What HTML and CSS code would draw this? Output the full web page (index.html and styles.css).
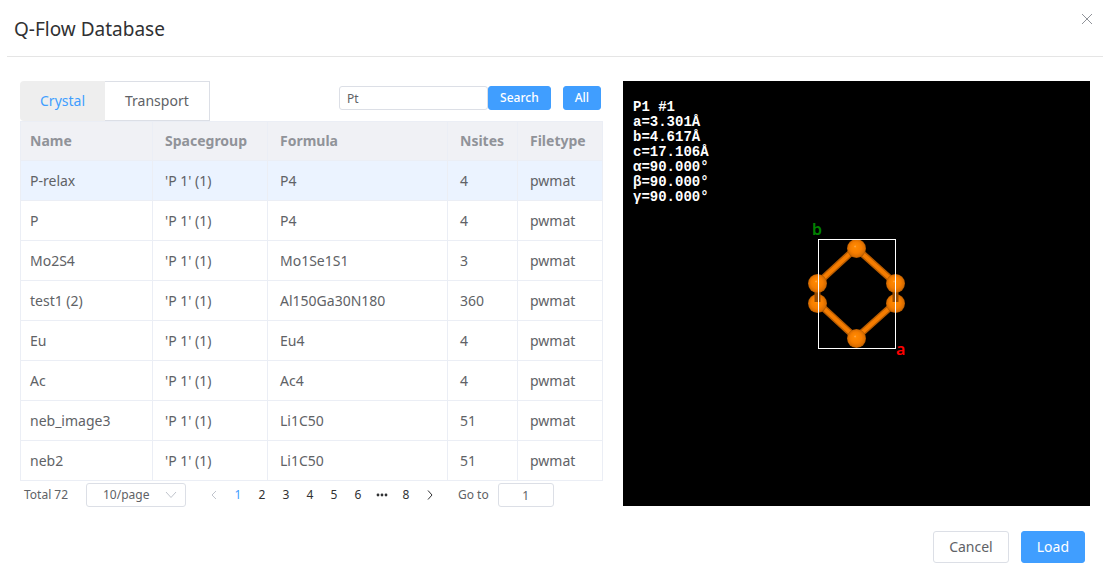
FILE: index.html
```html
<!DOCTYPE html>
<html lang="en">
<head>
<meta charset="utf-8">
<meta name="viewport" content="width=device-width, initial-scale=1">
<title>Q-Flow Database</title>
<link rel="stylesheet" href="styles.css">
</head>
<body>
<div class="dialog" role="dialog" aria-labelledby="dialog-title">
  <header class="dialog-header">
    <h1 class="dialog-title" id="dialog-title">Q-Flow Database</h1>
    <button class="close" type="button" aria-label="Close"><svg width="12" height="12" viewBox="0 0 12 12"><path d="M1 1L11 11M11 1L1 11"/></svg></button>
  </header>
  <main class="dialog-body">
    <section class="browser">
      <div class="toolbar">
        <div class="tabs" role="tablist">
          <button class="tab tab-active" type="button" role="tab" aria-selected="true">Crystal</button>
          <button class="tab" type="button" role="tab" aria-selected="false">Transport</button>
        </div>
        <form class="search">
          <input class="field search-field" type="text" value="Pt" aria-label="Search formula">
          <button class="button button-small button-primary" type="button">Search</button>
          <button class="button button-small button-primary button-all" type="button">All</button>
        </form>
      </div>
      <table class="table">
        <colgroup><col class="col-name"><col class="col-group"><col class="col-formula"><col class="col-sites"><col class="col-type"></colgroup>
        <thead>
          <tr><th>Name</th><th>Spacegroup</th><th>Formula</th><th>Nsites</th><th>Filetype</th></tr>
        </thead>
        <tbody>
          <tr class="current"><td>P-relax</td><td>'P 1' (1)</td><td>P4</td><td>4</td><td>pwmat</td></tr>
          <tr><td>P</td><td>'P 1' (1)</td><td>P4</td><td>4</td><td>pwmat</td></tr>
          <tr><td>Mo2S4</td><td>'P 1' (1)</td><td>Mo1Se1S1</td><td>3</td><td>pwmat</td></tr>
          <tr><td>test1 (2)</td><td>'P 1' (1)</td><td>Al150Ga30N180</td><td>360</td><td>pwmat</td></tr>
          <tr><td>Eu</td><td>'P 1' (1)</td><td>Eu4</td><td>4</td><td>pwmat</td></tr>
          <tr><td>Ac</td><td>'P 1' (1)</td><td>Ac4</td><td>4</td><td>pwmat</td></tr>
          <tr><td>neb_image3</td><td>'P 1' (1)</td><td>Li1C50</td><td>51</td><td>pwmat</td></tr>
          <tr><td>neb2</td><td>'P 1' (1)</td><td>Li1C50</td><td>51</td><td>pwmat</td></tr>
        </tbody>
      </table>
      <nav class="pagination" aria-label="Pagination">
        <span class="total">Total 72</span>
        <span class="size">
          <select class="field size-select" aria-label="Rows per page"><option>10/page</option><option>20/page</option></select>
          <svg class="size-arrow" width="12" height="8" viewBox="0 0 12 8"><path d="M1 1L6 6.5L11 1"/></svg>
        </span>
        <div class="pages">
          <button class="page" type="button" disabled aria-label="Previous page"><svg width="8" height="12" viewBox="0 0 8 12"><path d="M6 2L2 6L6 10"/></svg></button>
          <button class="page page-active" type="button">1</button>
          <button class="page" type="button">2</button>
          <button class="page" type="button">3</button>
          <button class="page" type="button">4</button>
          <button class="page" type="button">5</button>
          <button class="page" type="button">6</button>
          <button class="page" type="button" aria-label="Next 5 pages"><svg class="dots" width="12" height="4" viewBox="0 0 12 4"><circle cx="2" cy="2" r="1.4"/><circle cx="6" cy="2" r="1.4"/><circle cx="10" cy="2" r="1.4"/></svg></button>
          <button class="page" type="button">8</button>
          <button class="page" type="button" aria-label="Next page"><svg width="8" height="12" viewBox="0 0 8 12"><path d="M2 1.500L6 6L2 10.500"/></svg></button>
        </div>
        <label class="jump">Go to <input class="field jump-field" type="text" value="1"></label>
      </nav>
    </section>
    <section class="viewer" aria-label="Structure viewer">
      <div class="cell-info">P1 #1<br>a=3.301Å<br>b=4.617Å<br>c=17.106Å<br>α=90.000°<br>β=90.000°<br>γ=90.000°</div>
      <svg class="scene" viewBox="0 0 467 425">
        <defs>
          <radialGradient id="atom" cx="0.5" cy="0.5" r="0.5" fx="0.42" fy="0.38">
            <stop offset="0" stop-color="#ffb060"/>
            <stop offset="0.14" stop-color="#ff8800"/>
            <stop offset="0.6" stop-color="#f57d00"/>
            <stop offset="0.88" stop-color="#d96d00"/>
            <stop offset="1" stop-color="#a85400"/>
          </radialGradient>
        </defs>
        <g class="bond-edge"><path d="M233 167L195 202M233 167L272 202M195 222L233 257M272 222L233 257"/></g>
        <g class="bond"><path d="M233 167L195 202M233 167L272 202M195 222L233 257M272 222L233 257"/></g>
        <g class="atoms">
          <circle cx="233.500" cy="167.500" r="9.500"/>
          <circle cx="194.500" cy="222.500" r="9.500"/>
          <circle cx="272.500" cy="222.500" r="9.500"/>
          <circle cx="233.500" cy="257.500" r="9.500"/>
        </g>
        <path class="bond-back" d="M194.500 209V221M272.500 209V221"/>
        <g class="atoms">
          <circle cx="194.500" cy="202.500" r="9.500"/>
          <circle cx="272.500" cy="202.500" r="9.500"/>
        </g>
        <rect class="cell" x="195.500" y="158.500" width="77" height="109"/>
        <text class="axis axis-b" x="189" y="154">b</text>
        <text class="axis axis-a" x="273" y="274">a</text>
      </svg>
    </section>
  </main>
  <footer class="dialog-footer">
    <button class="button" type="button">Cancel</button>
    <button class="button button-primary" type="button">Load</button>
  </footer>
</div>
</body>
</html>
```

FILE: styles.css
```css
* { box-sizing: border-box; }

body {
  margin: 0;
  background: #fff;
  color: #606266;
  font: 14px/20px "Noto Sans", "Open Sans", sans-serif;
}

button, input, select { font: inherit; color: inherit; }
button { cursor: pointer; }

svg { fill: none; stroke: currentColor; }

.dialog-header {
  display: flex;
  align-items: flex-start;
  justify-content: space-between;
  height: 57px;
  margin: 0 7px;
  padding: 12px 9px 0 7px;
  border-bottom: 1px solid #e5e5e5;
}

.dialog-title {
  margin: 5px 0 0;
  color: #303133;
  font-size: 19px;
  font-weight: 400;
  line-height: 24px;
}

.close {
  display: flex;
  padding: 1px;
  border: 0;
  background: none;
  color: #909399;
}

.dialog-body {
  display: flex;
  align-items: flex-start;
  gap: 20px;
  padding: 24px 20px 0;
}

.browser { flex: 583 1 0; min-width: 0; }

.toolbar {
  display: flex;
  align-items: flex-start;
  justify-content: space-between;
}

.tabs { display: flex; }

.tab {
  height: 40px;
  padding: 0 20px;
  border: 1px solid #dcdfe6;
  border-left: 0;
  background: #fff;
}

.tab-active {
  border: 0;
  border-radius: 4px 0 0 4px;
  background: #eee;
  color: #409eff;
}

.search {
  display: flex;
  margin: 5px 2px 0 0;
}

.field {
  height: 24px;
  border: 1px solid #dcdfe6;
  border-radius: 3px;
  background: #fff;
  font-size: 12px;
}

.search-field {
  width: 149px;
  padding: 0 7px;
}

.button {
  height: 32px;
  padding: 0 15px;
  border: 1px solid #dcdfe6;
  border-radius: 3px;
  background: #fff;
}

.button-primary {
  border-color: #409eff;
  background: #409eff;
  color: #fff;
}

.button-small {
  height: 24px;
  padding: 0 11px;
  font-size: 12px;
  font-weight: 500;
}

.button-all { margin-left: 12px; }

.table {
  width: 100%;
  table-layout: fixed;
  border-spacing: 0;
  border: solid #ebeef5;
  border-width: 1px 0 0 1px;
}

.col-name { width: 132px; }
.col-group { width: 115px; }
.col-formula { width: 180px; }
.col-sites { width: 70px; }
.col-type { width: 85px; }

.table th, .table td {
  height: 40px;
  padding: 0 12px;
  border: solid #ebeef5;
  border-width: 0 1px 1px 0;
  text-align: left;
}

.table th:first-child, .table td:first-child { padding-left: 9px; }

.table th {
  height: 39px;
  background: #f0f1f5;
  color: #909399;
  font-weight: 700;
}

.current td { background: #ebf3ff; }

.pagination {
  display: flex;
  align-items: center;
  padding: 2px 4px 0;
  font-size: 12px;
}

.total { min-width: 62px; }

.size { position: relative; }

.size-select {
  display: block;
  width: 100px;
  padding: 0 16px;
  appearance: none;
}

.size-arrow {
  position: absolute;
  top: 8px;
  right: 9px;
  color: #c0c4cc;
  pointer-events: none;
}

.pages {
  display: flex;
  margin: 0 16px;
  color: #303133;
}

.page {
  display: flex;
  align-items: center;
  justify-content: center;
  width: 24px;
  height: 24px;
  padding: 0;
  border: 0;
  background: none;
}

.page:disabled { color: #c0c4cc; }
.page-active { color: #409eff; }
.dots { fill: currentColor; stroke: none; }

.jump {
  display: flex;
  align-items: center;
  gap: 9px;
}

.jump-field {
  width: 56px;
  padding: 0 4px;
  text-align: center;
}

.viewer {
  position: relative;
  flex: 467 1 0;
  min-width: 0;
  background: #000;
}

.cell-info {
  position: absolute;
  top: 19px;
  left: 10px;
  color: #fff;
  font: 700 14px/15px "Liberation Mono", monospace;
}

.scene {
  display: block;
  width: 100%;
  aspect-ratio: 467 / 425;
}

.bond-edge { stroke: #b85c00; stroke-width: 7px; }
.bond { stroke: #f57c00; stroke-width: 4px; }
.bond-back { stroke: #994b00; stroke-width: 6px; }
.atoms { fill: url(#atom); stroke: none; }
.cell { stroke: #fff; }

.axis {
  stroke: none;
  font: 600 16px "Noto Sans", sans-serif;
}

.axis-a { fill: #f00; }
.axis-b { fill: #008000; }

.dialog-footer {
  display: flex;
  justify-content: flex-end;
  gap: 12px;
  padding: 24px 25px;
}
```
